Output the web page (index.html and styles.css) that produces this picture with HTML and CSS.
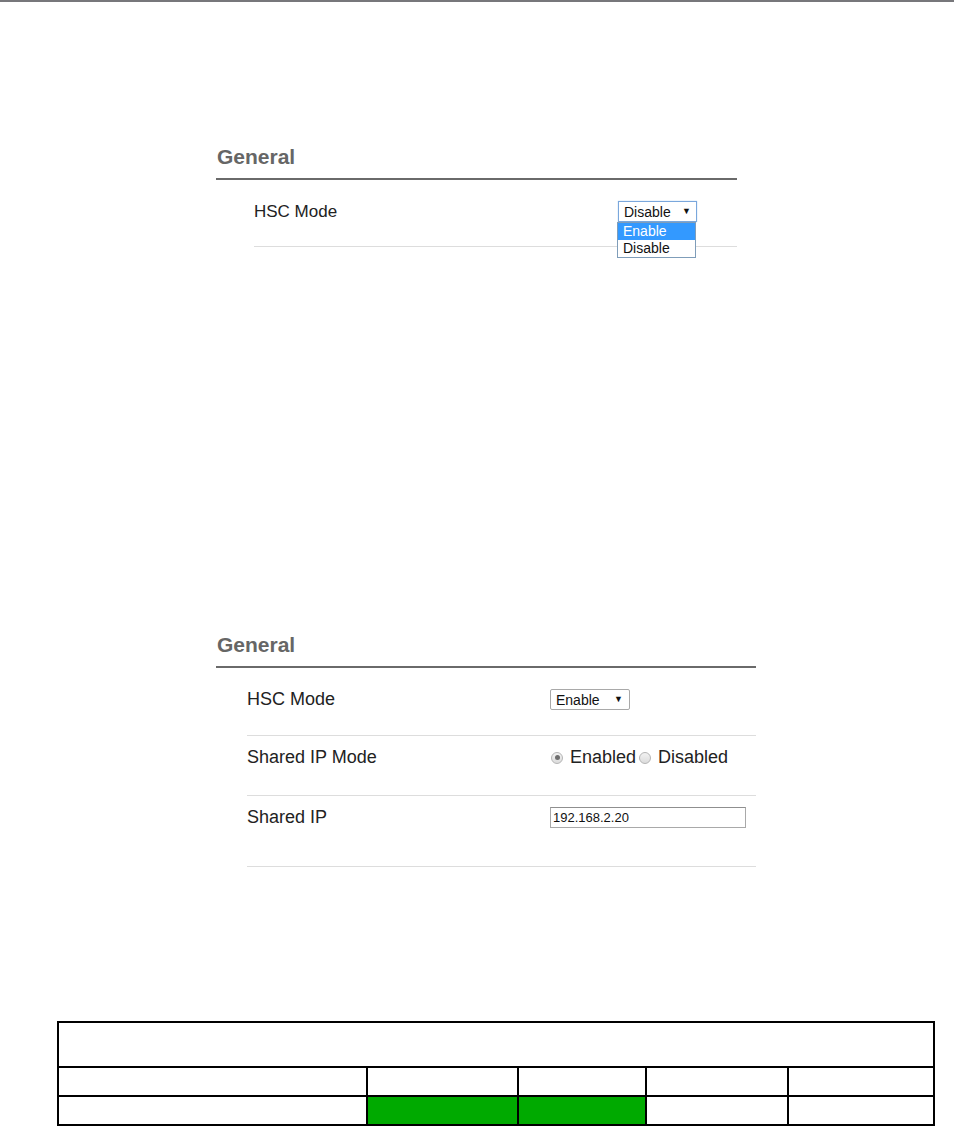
FILE: index.html
```html
<!DOCTYPE html>
<html>
<head>
<meta charset="utf-8">
<title>HSC Mode</title>
<link rel="stylesheet" href="styles.css">
</head>
<body>
<div class="topbar"></div>

<section class="panel panel-a">
  <h2 class="panel-title">General</h2>
  <div class="row row-a">
    <div class="label">HSC Mode</div>
    <div class="control">
      <div class="select select-focus">
        <span class="select-text">Disable</span>
        <span class="arrow">&#9660;</span>
      </div>
      <div class="dropdown">
        <div class="option option-active">Enable</div>
        <div class="option">Disable</div>
      </div>
    </div>
  </div>
</section>

<section class="panel panel-b">
  <h2 class="panel-title">General</h2>
  <div class="row row-b row-first">
    <div class="label">HSC Mode</div>
    <div class="control">
      <div class="select select-plain">
        <span class="select-text">Enable</span>
        <span class="arrow">&#9660;</span>
      </div>
    </div>
  </div>
  <div class="row row-b">
    <div class="label">Shared IP Mode</div>
    <div class="control radios">
      <span class="radio radio-on"></span><span class="radio-label">Enabled</span>
      <span class="radio"></span><span class="radio-label">Disabled</span>
    </div>
  </div>
  <div class="row row-b row-last">
    <div class="label">Shared IP</div>
    <div class="control">
      <div class="textbox">192.168.2.20</div>
    </div>
  </div>
</section>

<table class="grid">
  <colgroup>
    <col class="c1"><col class="c2"><col class="c3"><col class="c4"><col class="c5">
  </colgroup>
  <tr class="tr-head"><td colspan="5"></td></tr>
  <tr class="tr-body"><td></td><td></td><td></td><td></td><td></td></tr>
  <tr class="tr-body"><td></td><td class="on"></td><td class="on"></td><td></td><td></td></tr>
</table>
</body>
</html>
```

FILE: styles.css
```css
html, body {
  margin: 0;
  padding: 0;
  background: #ffffff;
}

body {
  font-family: "Liberation Sans", Arial, sans-serif;
  color: #222222;
}

.topbar {
  height: 2px;
  background: #77777b;
}

.panel {
  margin-left: 216px;
}

.panel-a {
  width: 521px;
  margin-top: 143px;
}

.panel-b {
  width: 540px;
  margin-top: 386px;
}

.panel-title {
  margin: 0;
  font-size: 21px;
  line-height: 24px;
  font-weight: bold;
  color: #666666;
  padding: 0 0 9px 1px;
  border-bottom: 2px solid #6a6a6a;
}

.row {
  display: flex;
  align-items: flex-start;
  border-bottom: 1px solid #dddddd;
}

.row-a {
  margin-left: 38px;
  padding: 21px 0 24px;
  font-size: 17px;
}

.row-a .label {
  width: 364px;
  line-height: 21px;
}

.row-b {
  margin-left: 31px;
  padding: 11px 0 27px;
  font-size: 18px;
}

.row-b.row-first {
  margin-top: 10px;
  padding-bottom: 25px;
}

.row-b.row-last {
  padding-bottom: 38px;
}

.row-b .label {
  width: 303px;
  line-height: 21px;
}

.control {
  position: relative;
  display: flex;
  align-items: center;
  height: 21px;
}

.select {
  box-sizing: border-box;
  height: 21px;
  display: flex;
  align-items: center;
  justify-content: space-between;
  background: #ffffff;
  font-size: 14px;
  color: #111111;
}

.select-focus {
  width: 79px;
  border: 1px solid #7aa7dc;
  padding: 0 5px 0 5px;
  box-shadow: 0 0 1px #9cc2ee;
}

.select-plain {
  width: 80px;
  border: 1px solid #a9a9a9;
  border-radius: 2px;
  padding: 0 6px 0 5px;
}

.arrow {
  font-size: 9px;
  line-height: 1;
  color: #111111;
}

.dropdown {
  position: absolute;
  top: 21px;
  left: -1px;
  width: 79px;
  box-sizing: border-box;
  border: 1px solid #7f9db9;
  background: #ffffff;
  font-size: 14px;
  z-index: 2;
}

.option {
  height: 17px;
  line-height: 17px;
  padding-left: 5px;
  color: #111111;
}

.option-active {
  background: #3399ff;
  color: #ffffff;
}

.radios {
  font-size: 18px;
}

.radio {
  box-sizing: border-box;
  width: 12px;
  height: 12px;
  border-radius: 50%;
  border: 1px solid #b5b5b5;
  background: linear-gradient(#f2f2f2, #dcdcdc);
  margin: 0 7px 0 1px;
  display: inline-flex;
  align-items: center;
  justify-content: center;
}

.radio-on::after {
  content: "";
  width: 5px;
  height: 5px;
  border-radius: 50%;
  background: #6e6e6e;
}

.radio-label {
  margin-right: 2px;
  color: #222222;
}

.textbox {
  box-sizing: border-box;
  width: 196px;
  height: 21px;
  border: 1px solid #a9a9a9;
  border-top-color: #8f8f8f;
  font-size: 13px;
  line-height: 19px;
  padding-left: 2px;
  color: #111111;
}

.grid {
  margin: 154px 0 0 57px;
  width: 876px;
  border-collapse: collapse;
  table-layout: fixed;
}

.grid td {
  border: 2px solid #000000;
  padding: 0;
}

.c1 { width: 309px; }
.c2 { width: 151px; }
.c3 { width: 128px; }
.c4 { width: 142px; }
.c5 { width: 146px; }

.tr-head td { height: 43px; }
.tr-body td { height: 27px; }

.grid td.on {
  background: #00aa00;
}
```
